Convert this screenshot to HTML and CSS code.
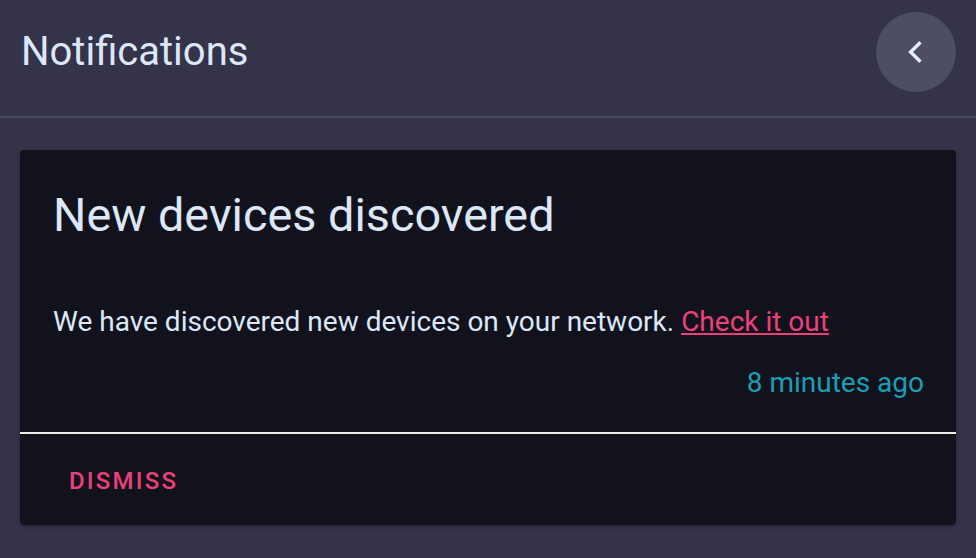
FILE: index.html
```html
<!DOCTYPE html>
<html>
<head>
<meta charset="utf-8">
<link rel="stylesheet" href="styles.css">
</head>
<body>
<header class="topbar">
  <h1 class="title">Notifications</h1>
  <button class="back-btn" aria-label="Back">
    <svg width="24" height="24" viewBox="0 0 24 24"><path d="M16.5 2.2 L6.6 12 L16.5 21.8" fill="none" stroke="#e3eefc" stroke-width="3.4" stroke-linecap="butt" stroke-linejoin="miter"/></svg>
  </button>
</header>
<main class="content">
  <section class="card">
    <div class="card-body">
      <h2 class="card-title">New devices discovered</h2>
      <p class="card-text">We have discovered new devices on your network. <a class="link" href="#">Check it out</a></p>
      <div class="card-time">8 minutes ago</div>
    </div>
    <div class="card-actions">
      <button class="action">DISMISS</button>
    </div>
  </section>
</main>
</body>
</html>
```
FILE: styles.css
```css
html, body {
  margin: 0;
  padding: 0;
  background: #34334a;
  font-family: Roboto, "Noto Sans", sans-serif;
  color: #dce8f8;
}
.topbar {
  height: 104px;
  border-bottom: 2px solid #4b4b5e;
  display: flex;
  align-items: flex-start;
  justify-content: space-between;
  padding: 12px 20px 0 21px;
}
.title {
  margin: 16px 0 0 0;
  font-size: 40px;
  line-height: 48px;
  font-weight: 400;
  color: #dce8f8;
}
.back-btn {
  width: 80px;
  height: 80px;
  border-radius: 50%;
  border: none;
  background: #4d4e66;
  display: flex;
  align-items: center;
  justify-content: center;
  padding: 0;
}
.content {
  padding: 32px 20px;
}
.card {
  background: #12121d;
  border-radius: 4px;
  box-shadow: 0 2px 4px rgba(0,0,0,0.25);
}
.card-body {
  padding: 37px 32px 29px 33px;
}
.card-title {
  margin: 0;
  font-size: 46.8px;
  font-weight: 400;
  line-height: 56px;
  color: #dce8f8;
}
.card-text {
  margin: 59px 0 0 0;
  font-size: 28px;
  line-height: 40px;
  color: #dce8f8;
}
.link {
  color: #ec407a;
  text-decoration: underline;
  text-underline-offset: 2px;
  text-decoration-thickness: 2px;
}
.card-time {
  text-align: right;
  font-size: 28px;
  line-height: 40px;
  margin-top: 21px;
  color: #1a9fb3;
}
.card-actions {
  border-top: 2px solid #ececec;
  padding: 29px 33px 26px;
}
.action {
  background: none;
  border: none;
  padding: 0 16px;
  font-family: Roboto, sans-serif;
  font-size: 24px;
  font-weight: 500;
  letter-spacing: 2.2px;
  color: #ec407a;
  line-height: 36px;
  display: block;
}
```
